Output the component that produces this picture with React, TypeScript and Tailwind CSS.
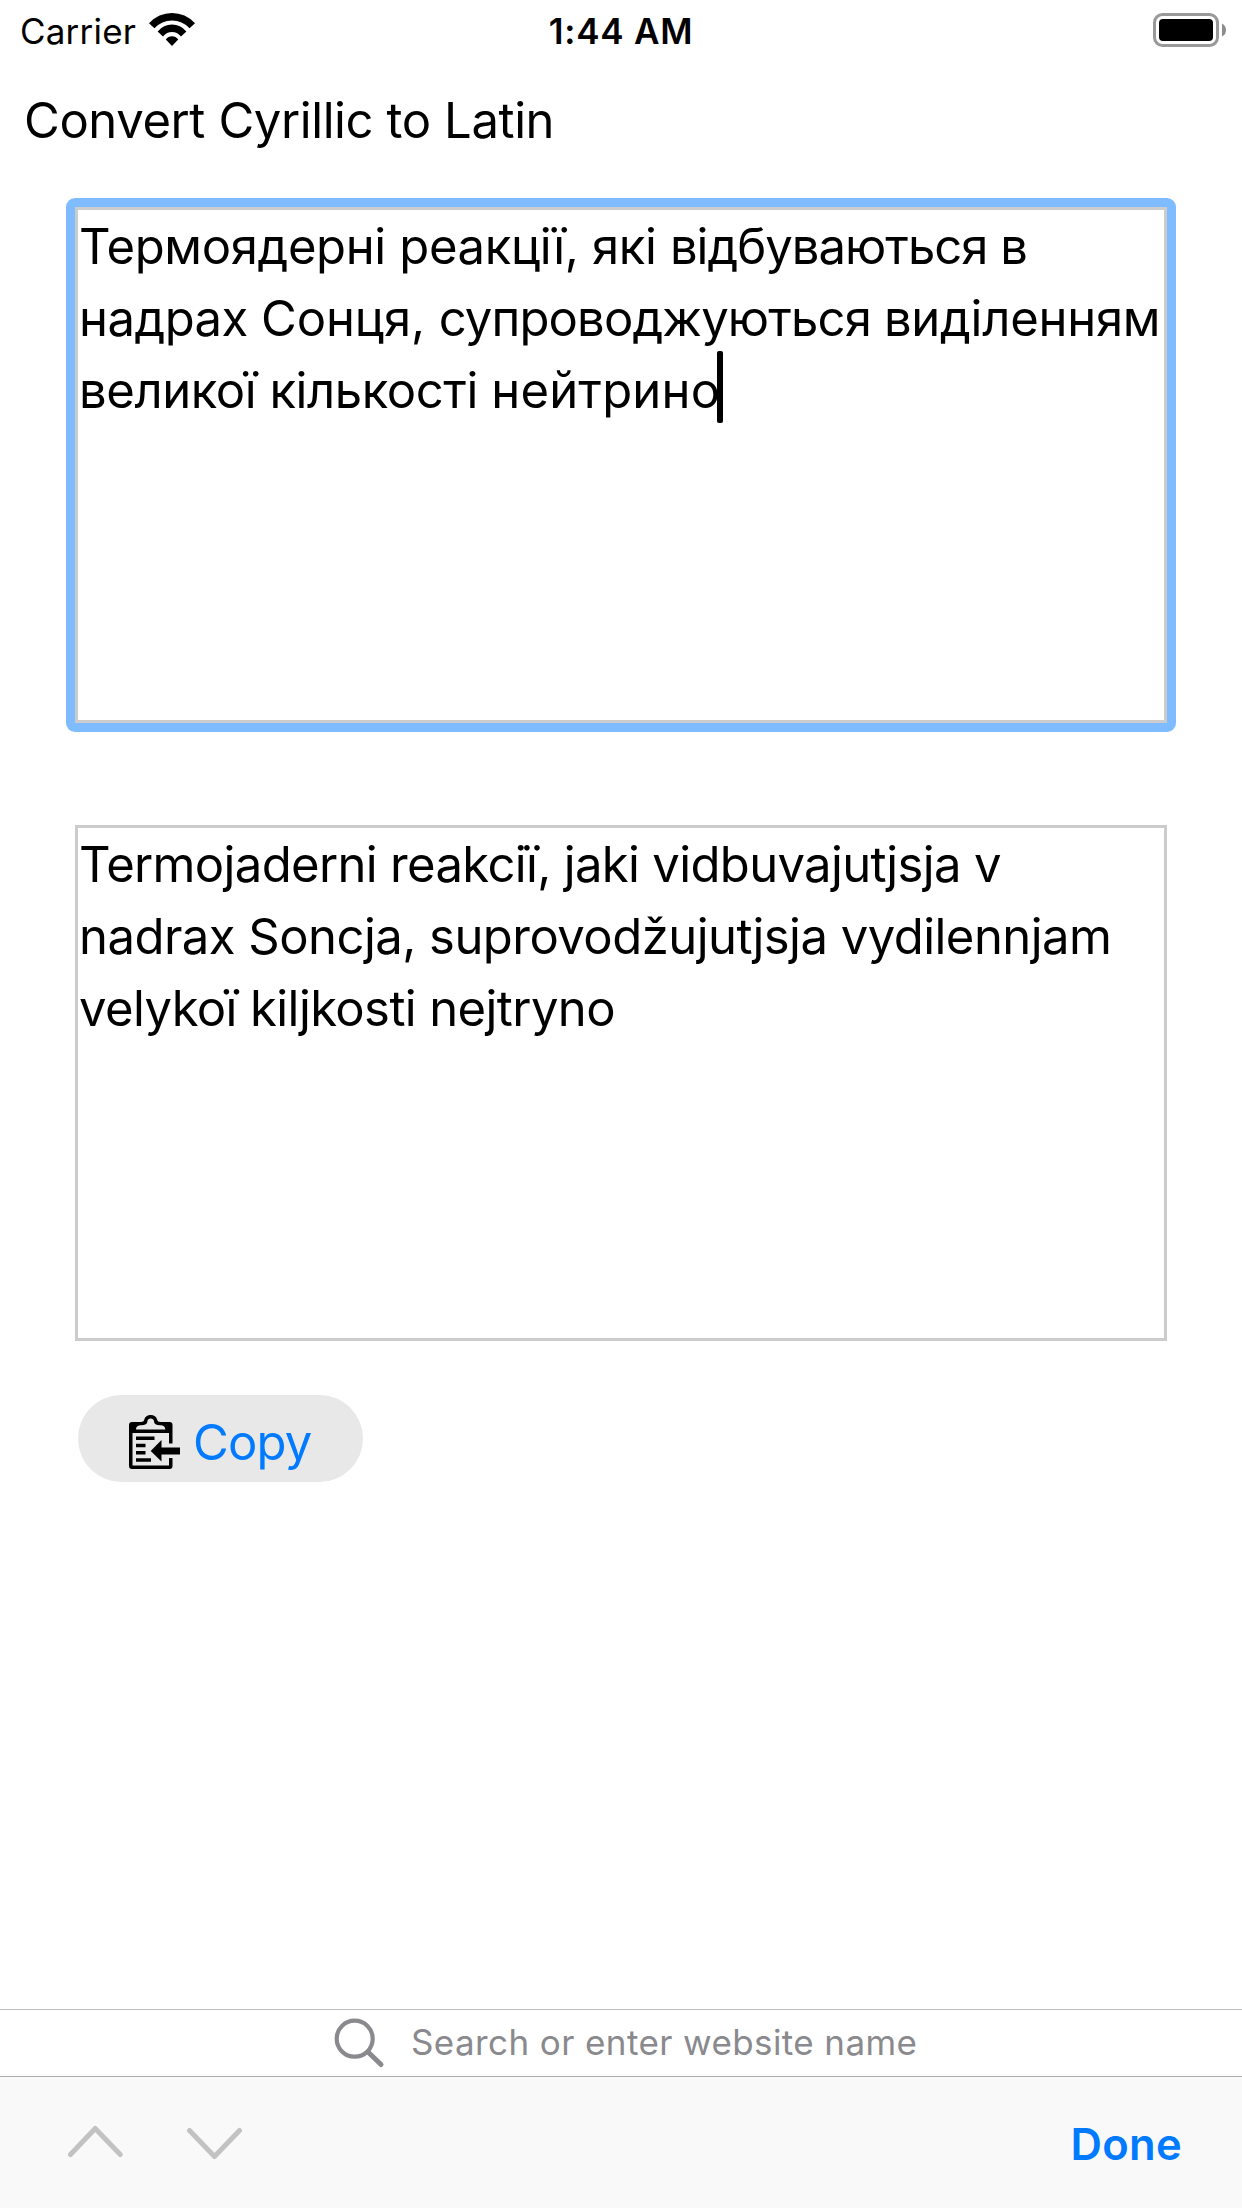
import type { ReactNode } from "react";

function WifiIcon() {
  return (
    <svg width="46" height="33" viewBox="0 0 46 33" className="block">
      <path d="M0 10.2Q9.6 0 23 0T46 10.2L40.6 15.2Q33.2 7.4 23 7.4T5.4 15.2Z" />
      <path d="M8.6 18.5Q14.6 11.6 23 11.6T37.4 18.5L32 23.4Q28.2 19 23 19T14 23.4Z" />
      <path d="M16.8 26.5Q19.2 23.2 23 23.2T29.2 26.5L23 33Z" />
    </svg>
  );
}

function BatteryIcon() {
  return (
    <svg width="73" height="34" viewBox="0 0 73 34" className="block">
      <rect x="1.5" y="1.5" width="63" height="31" rx="8" fill="none" stroke="#999" strokeWidth="3" />
      <rect x="6" y="6" width="54" height="22" rx="4" />
      <path d="M69 10.5Q73 12.5 73 17T69 23.5Z" fill="#8c8c8c" />
    </svg>
  );
}

function ClipboardIcon() {
  return (
    <svg width="51" height="54" viewBox="0 0 51 54" className="block">
      <path
        fillRule="evenodd"
        d="M3 7H11.5C14 7 15 6.2 15.3 4.5C16 1.6 18.4 0 21.7 0S27.4 1.6 28.1 4.5C28.4 6.2 29.4 7 32 7H40.5Q43.5 7 43.5 10V28.5H40V18H3.5V50.5H40V43H43.5V51Q43.5 54 40.5 54H3Q0 54 0 51V10Q0 7 3 7ZM7 14.5H36.3C36.3 11.5 34 10.3 31 10.3C27 10.3 25.2 9 25 6.5C24.8 4.5 23.5 3.6 21.7 3.6S18.6 4.5 18.4 6.5C18.2 9 16 10.3 12.4 10.3C9.3 10.3 7 11.5 7 14.5Z"
      />
      <path d="M7 21.5H25.5V25H7ZM7 28.8H16.5V32.3H7ZM7 36H16.5V39.5H7ZM7 43.2H22V46.7H7Z" />
      <path d="M21.7 36L32.5 25V32.5H51V39.5H32.5V46.5Z" />
    </svg>
  );
}

function Line({ className, children }: { className: string; children: ReactNode }) {
  return (
    <span className="block whitespace-nowrap">
      <span className={className}>{children}</span>
    </span>
  );
}

export default function App() {
  return (
    <div className="flex h-[2208px] w-[1242px] flex-col overflow-hidden bg-white font-['Inter','Liberation_Sans',sans-serif] text-black">
      <header className="grid h-[60px] grid-cols-[1fr_auto_1fr] items-center pt-[3px] text-[35px] leading-[56px]">
        <div className="flex items-center pl-5">
          <span className="-mt-[2px] tracking-[0.2px]">Carrier</span>
          <span className="-mt-[4px] ml-[13px]"><WifiIcon /></span>
        </div>
        <span className="-mt-[2px] font-semibold tracking-[0.8px]">1:44 AM</span>
        <div className="-mt-[3px] flex justify-end pr-4"><BatteryIcon /></div>
      </header>

      <h1 className="mt-[25px] h-[71px] pl-[24px] text-[49px] leading-[72px]">
        <span className="tracking-[-0.4px]">Convert Cyrillic to Latin</span>
      </h1>

      <main className="flex flex-1 flex-col px-[66px] pt-[42px] text-[49px] leading-[72px]">
        <div className="rounded-[9px] bg-[#7fbbff] p-[9px]">
          <div className="h-[516px] border-[3px] border-[#ccc] bg-white pt-[1px] pl-[1px]">
            <Line className="tracking-[-0.36px]">
              Термоядерні реакції, які <span className="tracking-[-1px]">відбуваються в</span>
            </Line>
            <Line className="tracking-[-0.53px]">
              надрах <span className="tracking-[-0.13px]">Сонця, </span>
              <span className="tracking-[-0.86px]">супроводжуються </span>
              <span className="tracking-[-0.25px]">виділенням</span>
            </Line>
            <Line className="relative tracking-[-0.43px]">
              великої кількості <span className="tracking-[0.2px]">нейтрино</span>
              <i className="absolute -top-[10px] -right-[3px] h-[72px] w-[6px] rounded-[2px] bg-black" />
            </Line>
          </div>
        </div>
        <div className="mx-[9px] mt-[93px] h-[516px] border-[3px] border-[#ccc] pt-[1px] pl-[1px]">
          <Line className="tracking-[-0.66px]">Termojaderni reakciї, jaki vidbuvajutjsja v</Line>
          <Line className="tracking-[-0.53px]">nadrax Soncja, suprovodžujutjsja vydilennjam</Line>
          <Line className="tracking-[-0.6px]">velykoї kiljkosti nejtryno</Line>
        </div>
        <button className="mt-[54px] ml-[12px] flex h-[87px] w-[285px] items-center rounded-full bg-[#e8e8e8] pl-[51px]">
          <span className="mt-[7px]"><ClipboardIcon /></span>
          <span className="mt-[9px] ml-[13px] tracking-[-0.8px] text-[#007aff]">Copy</span>
        </button>
      </main>

      <div className="flex h-[67px] items-center justify-start border-t border-[#bfbfbf] pl-[334px] text-[#8a8a8e]">
        <svg width="52" height="52" viewBox="0 0 52 52" fill="none" stroke="currentColor" strokeWidth="4.2" strokeLinecap="round" className="block">
          <circle cx="20.7" cy="21.7" r="18" />
          <path d="M34.5 35.5L47 47.5" strokeWidth="5" />
        </svg>
        <span className="-mt-[2px] ml-[25px] text-[35px] tracking-[0.4px] whitespace-nowrap">Search or enter website name</span>
      </div>
      <footer className="flex h-[132px] items-center border-t border-[#adadad] bg-[#f9f9f9] pl-[67px]">
        <svg width="176" height="36" viewBox="0 0 176 36" fill="none" stroke="#c2c2c2" strokeWidth="5" strokeLinecap="round" strokeLinejoin="round" className="-mt-[2px] block">
          <path d="M3.5 30.5L28.2 4.5L53.2 30.5M122.5 6.5L147.5 32.5L172.5 6.5" />
        </svg>
        <span className="mt-[4px] ml-auto pr-[60px] text-[43.5px] font-semibold tracking-[0.3px] text-[#007aff]">Done</span>
      </footer>
    </div>
  );
}
